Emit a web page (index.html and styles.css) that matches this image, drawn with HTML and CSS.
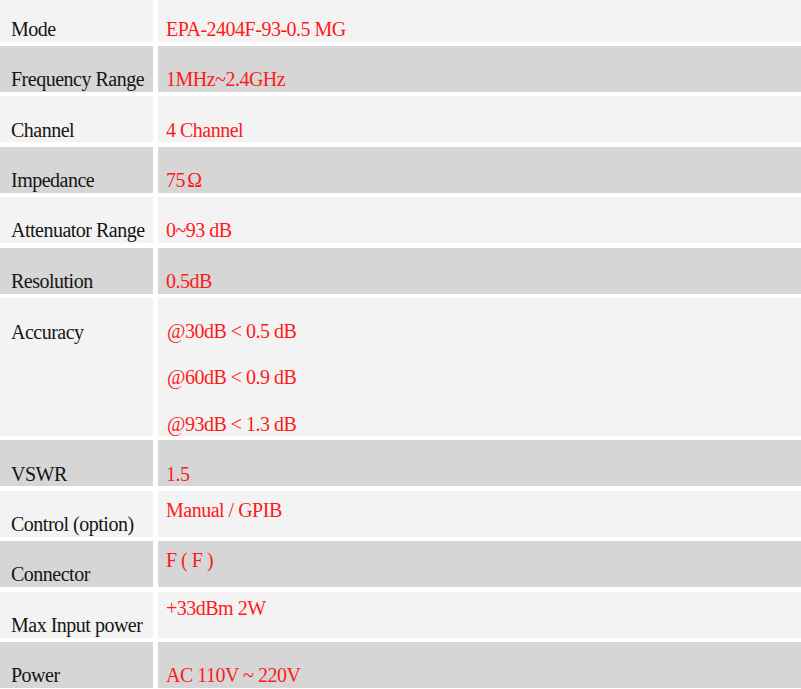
FILE: index.html
```html
<!DOCTYPE html>
<html lang="en">
<head>
<meta charset="utf-8">
<title>EPA-2404F-93-0.5 MG</title>
<link rel="stylesheet" href="styles.css">
</head>
<body>
<div class="spec">
  <div class="cell key">Mode</div>
  <div class="cell val">EPA-2404F-93-0.5 MG</div>

  <div class="cell key alt">Frequency Range</div>
  <div class="cell val alt">1MHz~2.4GHz</div>

  <div class="cell key">Channel</div>
  <div class="cell val">4 Channel</div>

  <div class="cell key alt">Impedance</div>
  <div class="cell val alt">75&#8202;&#8202;Ω</div>

  <div class="cell key">Attenuator Range</div>
  <div class="cell val">0~93 dB</div>

  <div class="cell key alt">Resolution</div>
  <div class="cell val alt">0.5dB</div>

  <div class="cell key tall key-top">Accuracy</div>
  <div class="cell val tall lines">@30dB &lt; 0.5 dB<br>@60dB &lt; 0.9 dB<br>@93dB &lt; 1.3 dB</div>

  <div class="cell key alt">VSWR</div>
  <div class="cell val alt">1.5</div>

  <div class="cell key">Control (option)</div>
  <div class="cell val up-26">Manual / GPIB</div>

  <div class="cell key alt">Connector</div>
  <div class="cell val alt up-25">F ( F )</div>

  <div class="cell key">Max Input power</div>
  <div class="cell val up-23">+33dBm 2W</div>

  <div class="cell key alt">Power</div>
  <div class="cell val alt">AC 110V ~ 220V</div>
</div>
</body>
</html>
```

FILE: styles.css
```css
html, body {
  margin: 0;
  padding: 0;
  background: #ffffff;
}

body {
  width: 801px;
  height: 689px;
  overflow: hidden;
}

.spec {
  display: grid;
  grid-template-columns: 153px 1fr;
  column-gap: 5px;
  row-gap: 4.4px;
  margin-top: -4.4px;
  font-family: "Liberation Serif", "Times New Roman", serif;
  font-size: 20px;
  line-height: 20px;
  letter-spacing: -0.5px;
}

.cell {
  box-sizing: border-box;
  height: 46px;
  padding-top: 23.25px;
  background: #f3f3f3;
  white-space: nowrap;
}

.cell.alt {
  background: #d6d6d6;
}

.key {
  padding-left: 11px;
  color: #151515;
}

.val {
  padding-left: 8px;
  color: #ff1a1a;
}

.tall {
  height: 138px;
}

.key-top {
  padding-top: 24.25px;
}

.lines {
  line-height: 46.3px;
  padding-top: 10px;
  padding-left: 9px;
}

.up-26 {
  padding-top: 9.25px;
}

.up-25 {
  padding-top: 8.75px;
}

.up-23 {
  padding-top: 6.75px;
}
```
